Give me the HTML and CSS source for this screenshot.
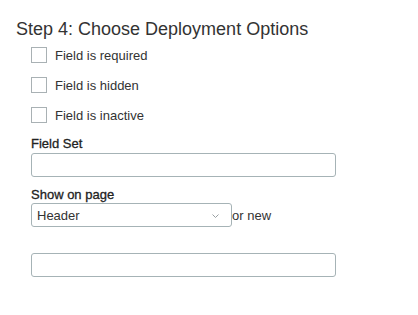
FILE: index.html
```html
<html>
<head>
<meta name="viewport" content="width=device-width, initial-scale=1">
<link rel="stylesheet" href="styles.css">
</head>
<body>
<div class="step">
  <h3 class="step-title">Step 4: Choose Deployment Options</h3>
  <div class="options">
    <label class="check"><input type="checkbox"> Field is required</label>
    <label class="check"><input type="checkbox"> Field is hidden</label>
    <label class="check"><input type="checkbox"> Field is inactive</label>

    <label class="field-label" for="fieldset">Field Set</label>
    <input id="fieldset" class="text-input" type="text">

    <label class="field-label page-label" for="page">Show on page</label>
    <div class="page-row">
      <div class="select-wrap">
        <select id="page" class="page-select">
          <option>Header</option>
        </select>
        <svg class="chevron" width="7" height="4" viewBox="0 0 7 4"><path d="M0.5 0.5 L3.5 3.5 L6.5 0.5" fill="none" stroke="#9aa0a3" stroke-width="1"/></svg>
      </div>
      <span class="or-new">or new</span>
    </div>
    <input class="text-input new-input" type="text">
  </div>
</div>
</body>
</html>
```

FILE: styles.css
```css
body{
  margin:0;
  background:#fff;
  font-family:"Liberation Sans", Arial, sans-serif;
  color:#333;
}
.step{
  padding:19px 0 0 16px;
}
.step-title{
  margin:0;
  font-size:18px;
  line-height:21px;
  font-weight:normal;
  color:#333;
}
.options{
  padding-left:15px;
  padding-top:7px;
  display:flex;
  flex-direction:column;
  align-items:flex-start;
}
.check{
  display:flex;
  align-items:center;
  height:16px;
  margin-bottom:14px;
  font-size:13px;
  color:#333;
}
.check input{
  appearance:none;
  -webkit-appearance:none;
  width:16px;
  height:16px;
  margin:0 8px 0 0;
  border:1px solid #a9b1b4;
  background:#fff;
}
.check:nth-of-type(3){
  margin-bottom:13px;
}
.field-label{
  font-size:13px;
  line-height:16px;
  color:#222;
  -webkit-text-stroke:0.3px #222;
  margin-bottom:1px;
}
.page-label{
  margin-bottom:0;
}
.text-input{
  box-sizing:border-box;
  width:305px;
  height:24px;
  margin:0 0 10px;
  border:1px solid #a6b3b6;
  border-radius:3px;
  background:#fff;
  font:13px "Liberation Sans", Arial, sans-serif;
}
.page-row{
  display:flex;
  align-items:center;
}
.select-wrap{
  position:relative;
  display:flex;
}
.page-select{
  appearance:none;
  -webkit-appearance:none;
  box-sizing:border-box;
  width:201px;
  height:24px;
  margin:0;
  padding:0 0 0 5px;
  border:1px solid #a6b3b6;
  border-radius:3px;
  background:#fff;
  color:#333;
  font:13px "Liberation Sans", Arial, sans-serif;
}
.chevron{
  position:absolute;
  left:181px;
  top:11px;
}
.or-new{
  font-size:13px;
  color:#333;
}
.new-input{
  margin-top:26px;
}
```
